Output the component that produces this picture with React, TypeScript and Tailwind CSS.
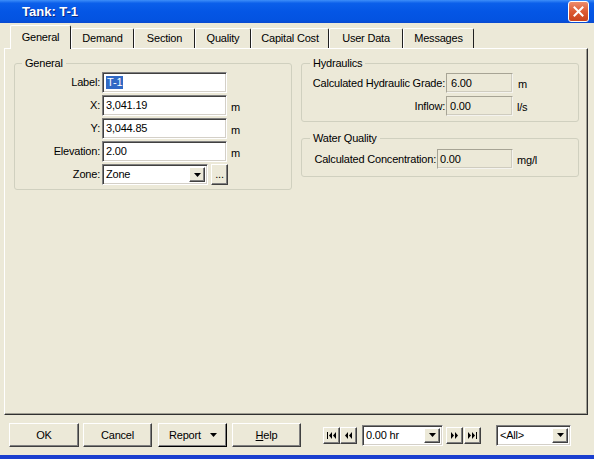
import React from "react";

const raised =
  "bg-[#ECE9D8] border border-t-white border-l-white border-r-[#404040] border-b-[#404040] shadow-[inset_-1px_-1px_0_#808080]";
const sunken =
  "bg-white border border-t-[#808080] border-l-[#808080] border-r-white border-b-white shadow-[inset_1px_1px_0_#404040,inset_-1px_-1px_0_#d4d0c8]";

function DownArrow() {
  return (
    <svg width="7" height="4" viewBox="0 0 7 4">
      <path d="M0 0h7L3.5 4z" fill="#000" />
    </svg>
  );
}

function Combo({ value, width }: { value: string; width: string }) {
  return (
    <div className={`${sunken} ${width} h-[21px] flex items-stretch p-[2px]`}>
      <div className="flex-1 flex items-center pl-[1px] leading-none">{value}</div>
      <div className={`${raised} w-[16px] flex items-center justify-center`}>
        <DownArrow />
      </div>
    </div>
  );
}

function Label({ text, width }: { text: string; width: string }) {
  return (
    <div className={`${width} shrink-0 flex justify-end`}>
      <span className="shrink-0 whitespace-nowrap">{text}</span>
    </div>
  );
}

function EditRow({ label, value, unit, selected }: { label: string; value: string; unit?: string; selected?: boolean }) {
  return (
    <div className="flex items-center h-[21px]">
      <Label text={label} width="w-[85px] mr-[2px]" />
      <div className={`${sunken} w-[125px] h-[21px] flex items-center pl-[3px] leading-none`}>
        {selected ? <span className="bg-[#316AC5] text-white px-[1px] py-[1px]">{value}</span> : value}
      </div>
      {unit && <div className="ml-[4px] pt-[3px]">{unit}</div>}
    </div>
  );
}

function ReadField({ value, width, pad }: { value: string; width: string; pad: string }) {
  return (
    <div
      className={`${width} ${pad} h-[20px] shrink-0 flex items-center leading-none border border-t-[#a7a495] border-l-[#a7a495] border-r-[#f4f3ee] border-b-[#f4f3ee] shadow-[inset_-1px_-1px_0_#cfccbf]`}
    >
      {value}
    </div>
  );
}

function NavIcon({ kind }: { kind: "first" | "prev" | "next" | "last" }) {
  const paths: Record<string, string> = {
    first: "M0 0h1v7H0z M5 0v7L2 3.5z M9 0v7L6 3.5z",
    prev: "M4 0v7L1 3.5z M8 0v7L5 3.5z",
    next: "M1 0v7l3-3.5z M5 0v7l3-3.5z",
    last: "M0 0v7l3-3.5z M4 0v7l3-3.5z M8 0h1v7H8z",
  };
  return (
    <svg width="9" height="7" viewBox="0 0 9 7">
      <path d={paths[kind]} fill="#000" />
    </svg>
  );
}

const TABS = [
  { name: "General", w: "w-[61px]" },
  { name: "Demand", w: "w-[63px]" },
  { name: "Section", w: "w-[61px]" },
  { name: "Quality", w: "w-[56px]" },
  { name: "Capital Cost", w: "w-[78px]" },
  { name: "User Data", w: "w-[74px]" },
  { name: "Messages", w: "w-[71px]" },
];

export default function App() {
  return (
    <div className="w-[594px] h-[459px] bg-[#ECE9D8] flex flex-col overflow-hidden font-['Liberation_Sans',Arial,sans-serif] text-[11px] tracking-[-0.2px] text-black">
      {/* Title bar */}
      <div className="h-[23px] flex items-center justify-between pl-[22px] pr-[5px] bg-[linear-gradient(to_bottom,#3d8ef9_0%,#0b5fea_14%,#0456e5_50%,#0353e1_86%,#0a49cf_100%)]">
        <span className="text-white font-bold text-[13px] tracking-normal [text-shadow:1px_1px_0_#0a2a8a]">Tank: T-1</span>
        <div className="w-[21px] h-[21px] rounded-[3px] border border-white bg-[linear-gradient(to_bottom,#ec8c6c,#dd5b34_50%,#c9431e)] flex items-center justify-center">
          <svg width="11" height="11" viewBox="0 0 11 11">
            <path d="M1.5 1.5l8 8M9.5 1.5l-8 8" stroke="#fff" strokeWidth="2" strokeLinecap="square" />
          </svg>
        </div>
      </div>

      <div className="px-[4px]">
        {/* Tabs */}
        <div className="mt-[2px] h-[23px] flex items-end pl-[6px]">
          {TABS.map((t, i) => (
            <div
              key={t.name}
              className={`${t.w} whitespace-nowrap flex items-center justify-center border-t border-l border-r border-t-white border-l-white border-r-[#202020] rounded-t-[2px] ${
                i === 0 ? "h-[24px] relative z-10 -mb-[1px] bg-[#ECE9D8]" : "h-[20px] border-l-[#ECE9D8]"
              }`}
            >
              {t.name}
            </div>
          ))}
        </div>

        {/* Panel */}
        <div className="w-[584px] h-[367px] border border-t-white border-l-white border-r-[#303030] border-b-[#303030] shadow-[inset_-1px_-1px_0_#a09e93] flex items-start">
          <fieldset className="ml-[9px] mt-[8px] w-[278px] border border-[#d0d0bf] rounded-[3px] pt-[2px] pb-[4px]">
            <legend className="ml-[7px] px-[3px] leading-[13px]">General</legend>
            <div className="flex flex-col gap-[2px]">
              <EditRow label="Label:" value="T-1" selected />
              <EditRow label="X:" value="3,041.19" unit="m" />
              <EditRow label="Y:" value="3,044.85" unit="m" />
              <EditRow label="Elevation:" value="2.00" unit="m" />
              <div className="flex items-center h-[21px]">
                <Label text="Zone:" width="w-[85px] mr-[2px]" />
                <Combo value="Zone" width="w-[106px]" />
                <div className={`${raised} ml-[3px] w-[17px] h-[21px] flex items-end justify-center pb-[4px] leading-none`}>...</div>
              </div>
            </div>
          </fieldset>

          <div className="ml-[9px] mt-[8px] w-[278px] flex flex-col">
            <fieldset className="border border-[#d0d0bf] rounded-[3px] pt-[3px] pb-[5px] pl-[11px]">
              <legend className="-ml-[3px] px-[3px] leading-[13px]">Hydraulics</legend>
              <div className="flex flex-col gap-[3px]">
                <div className="flex items-center">
                  <Label text="Calculated Hydraulic Grade:" width="w-[133px] pr-[1px]" />
                  <ReadField value="6.00" width="w-[67px]" pad="pl-[4px]" />
                  <div className="ml-[5px] pt-[2px]">m</div>
                </div>
                <div className="flex items-center">
                  <Label text="Inflow:" width="w-[133px] pr-[1px]" />
                  <ReadField value="0.00" width="w-[67px]" pad="pl-[3px]" />
                  <div className="ml-[4px] pt-[2px]">l/s</div>
                </div>
              </div>
            </fieldset>

            <fieldset className="mt-[10px] border border-[#d0d0bf] rounded-[3px] pt-[4px] pb-[7px] pl-[11px]">
              <legend className="-ml-[3px] px-[3px] leading-[13px]">Water Quality</legend>
              <div className="flex items-center">
                <Label text="Calculated Concentration:" width="w-[124px] pr-[1px]" />
                <ReadField value="0.00" width="w-[76px]" pad="pl-[2px]" />
                <div className="ml-[4px] pt-[2px]">mg/l</div>
              </div>
            </fieldset>
          </div>
        </div>
      </div>

      {/* Buttons */}
      <div className="mt-[8px] h-[24px] flex items-center pl-[9px]">
        <div className={`${raised} w-[70px] h-[24px] flex items-center justify-center`}>OK</div>
        <div className={`${raised} ml-[4px] w-[69px] h-[24px] flex items-center justify-center`}>Cancel</div>
        <div className={`${raised} ml-[6px] w-[69px] h-[24px] flex items-center pl-[10px] border-r-black border-b-black`}>
          <span>Report</span>
          <span className="ml-[9px] flex items-center">
            <DownArrow />
          </span>
        </div>
        <div className={`${raised} ml-[5px] w-[69px] h-[24px] flex items-center justify-center`}>
          <span>
            <span className="underline">H</span>elp
          </span>
        </div>

        <div className={`${raised} ml-[22px] w-[17px] h-[17px] flex items-center justify-center`}>
          <NavIcon kind="first" />
        </div>
        <div className={`${raised} w-[17px] h-[17px] flex items-center justify-center`}>
          <NavIcon kind="prev" />
        </div>
        <div className="ml-[5px]">
          <Combo value="0.00 hr" width="w-[81px]" />
        </div>
        <div className={`${raised} ml-[3px] w-[17px] h-[17px] flex items-center justify-center`}>
          <NavIcon kind="next" />
        </div>
        <div className={`${raised} ml-[1px] w-[17px] h-[17px] flex items-center justify-center`}>
          <NavIcon kind="last" />
        </div>
        <div className="ml-[15px]">
          <Combo value="<All>" width="w-[75px]" />
        </div>
      </div>

      <div className="flex-1" />
      <div className="h-[4px] bg-[#1a3fcf]" />
    </div>
  );
}
